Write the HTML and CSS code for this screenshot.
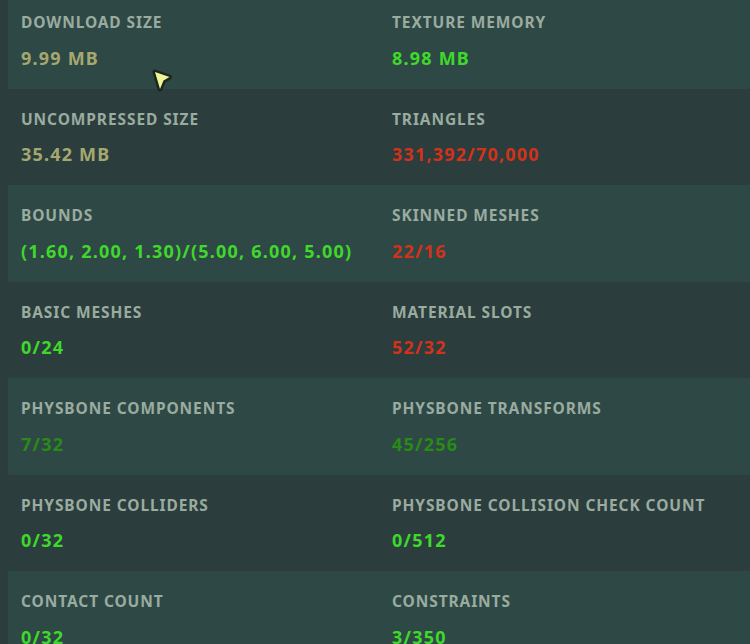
FILE: index.html
```html
<!DOCTYPE html>
<html>
<head>
<meta charset="utf-8">
<link rel="stylesheet" href="styles.css">
</head>
<body>
<div class="stats">
  <div class="row light">
    <div class="cell"><div class="label">Download Size</div><div class="value olive">9.99 MB</div></div>
    <div class="cell"><div class="label">Texture Memory</div><div class="value green">8.98 MB</div></div>
  </div>
  <div class="row dark">
    <div class="cell"><div class="label">Uncompressed Size</div><div class="value olive">35.42 MB</div></div>
    <div class="cell"><div class="label">Triangles</div><div class="value red">331,392/70,000</div></div>
  </div>
  <div class="row light">
    <div class="cell"><div class="label">Bounds</div><div class="value green">(1.60, 2.00, 1.30)/(5.00, 6.00, 5.00)</div></div>
    <div class="cell"><div class="label">Skinned Meshes</div><div class="value red">22/16</div></div>
  </div>
  <div class="row dark">
    <div class="cell"><div class="label">Basic Meshes</div><div class="value green">0/24</div></div>
    <div class="cell"><div class="label">Material Slots</div><div class="value red">52/32</div></div>
  </div>
  <div class="row light">
    <div class="cell"><div class="label">PhysBone Components</div><div class="value dkgreen">7/32</div></div>
    <div class="cell"><div class="label">PhysBone Transforms</div><div class="value dkgreen">45/256</div></div>
  </div>
  <div class="row dark">
    <div class="cell"><div class="label">PhysBone Colliders</div><div class="value green">0/32</div></div>
    <div class="cell"><div class="label">PhysBone Collision Check Count</div><div class="value green">0/512</div></div>
  </div>
  <div class="row light">
    <div class="cell"><div class="label">Contact Count</div><div class="value green">0/32</div></div>
    <div class="cell"><div class="label">Constraints</div><div class="value green">3/350</div></div>
  </div>
</div>
<svg class="cursor" width="32" height="34" viewBox="0 0 32 34">
  <path class="cursor-shape" d="M8 8 L22.5 13 L16.5 16.5 L13 25 Z"/>
</svg>
</body>
</html>
```
FILE: styles.css
```css
html, body {
  margin: 0;
  padding: 0;
  background: #2b3d3d;
  overflow: hidden;
}
body {
  font-family: "Noto Sans", "Open Sans", sans-serif;
  width: 750px;
  height: 644px;
  position: relative;
}
.stats {
  margin-top: -8px;
}
.row {
  display: grid;
  grid-template-columns: 1fr 1fr;
  height: 96.5px;
  box-sizing: border-box;
  padding-top: 20px;
}
.row.light {
  background: #2e4846;
  margin-left: 8px;
}
.row.dark {
  background: transparent;
  padding-left: 8px;
}
.cell {
  padding-left: 13px;
  white-space: nowrap;
}
.label {
  font-size: 15.5px;
  font-weight: 700;
  letter-spacing: 0.9px;
  text-transform: uppercase;
  color: #9aab9f;
  line-height: 20px;
}
.value {
  font-size: 18px;
  font-weight: 700;
  line-height: 22px;
  margin-top: 14.5px;
  letter-spacing: 1.2px;
}
.olive { color: #a5a86e; }
.green { color: #3fd82b; }
.red { color: #d2321a; }
.dkgreen { color: #2a8a18; }
.cursor {
  position: absolute;
  left: 147px;
  top: 64px;
}
.cursor-shape {
  fill: #eef59a;
  stroke: #1d271b;
  stroke-width: 5;
  stroke-linejoin: round;
  paint-order: stroke fill;
}
```
